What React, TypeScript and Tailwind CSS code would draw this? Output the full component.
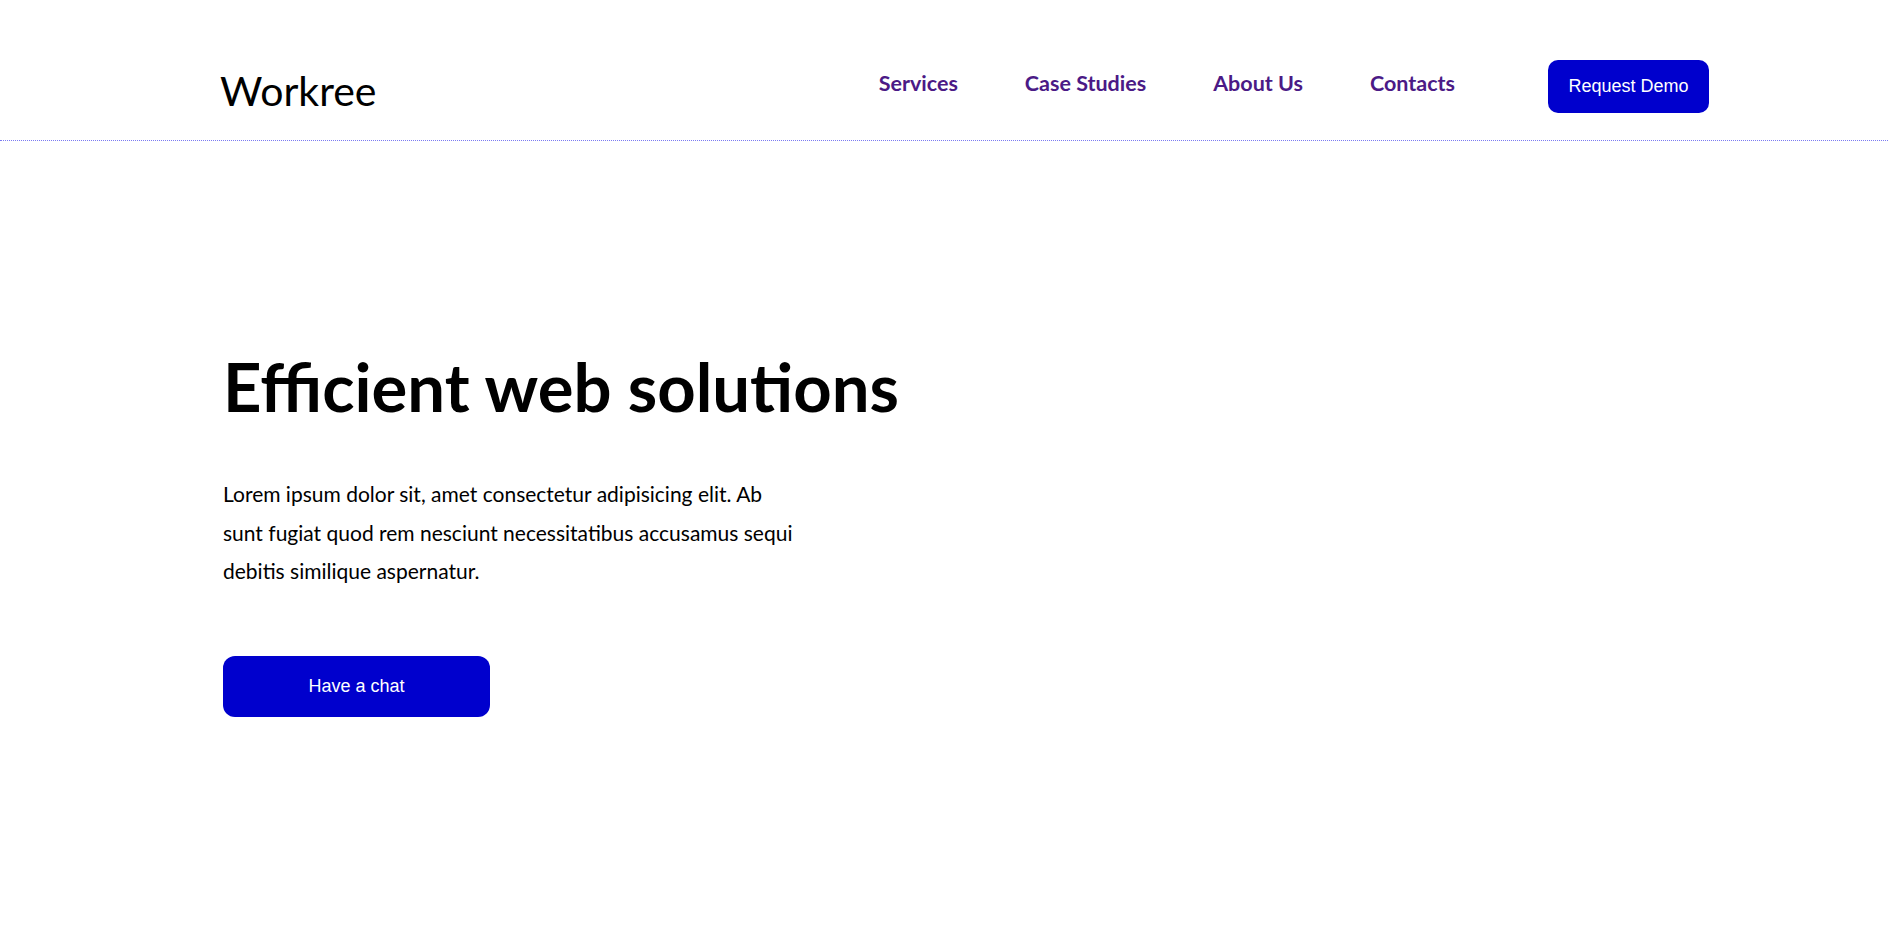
const navLinks = ['Services', 'Case Studies', 'About Us', 'Contacts'];

export default function App() {
  return (
    <div className="min-h-screen bg-white font-['Lato',sans-serif] text-black">
      <header className="h-[141px] border-b border-dotted border-[#7b7bf2]">
        <div className="flex h-full items-center justify-between pl-[220px] pr-[179px] pt-[32px]">
          <a href="#" className="mt-[8px] text-[41px] leading-none text-black">
            Workree
          </a>
          <nav className="flex items-center">
            <ul className="mb-[5px] flex items-center gap-[67px]">
              {navLinks.map((link) => (
                <li key={link}>
                  <a href="#" className="text-[21.5px] font-bold text-[#4b1a86]">
                    {link}
                  </a>
                </li>
              ))}
            </ul>
            <button className="ml-[93px] h-[53px] w-[161px] rounded-[10px] bg-[#0000cd] font-['Liberation_Sans',Arial,sans-serif] text-[18px] text-white">
              Request Demo
            </button>
          </nav>
        </div>
      </header>

      <main className="pl-[223px] pt-[212px]">
        <h1 className="text-[67px] font-bold leading-none">Efficient web solutions</h1>
        <p className="mt-[55px] w-[580px] text-[21px] leading-[38.5px]">
          Lorem ipsum dolor sit, amet consectetur adipisicing elit. Ab sunt fugiat quod rem nesciunt
          necessitatibus accusamus sequi debitis similique aspernatur.
        </p>
        <button className="mt-[65px] h-[61px] w-[267px] rounded-[12px] bg-[#0000cd] font-['Liberation_Sans',Arial,sans-serif] text-[18px] text-white">
          Have a chat
        </button>
      </main>
    </div>
  );
}
